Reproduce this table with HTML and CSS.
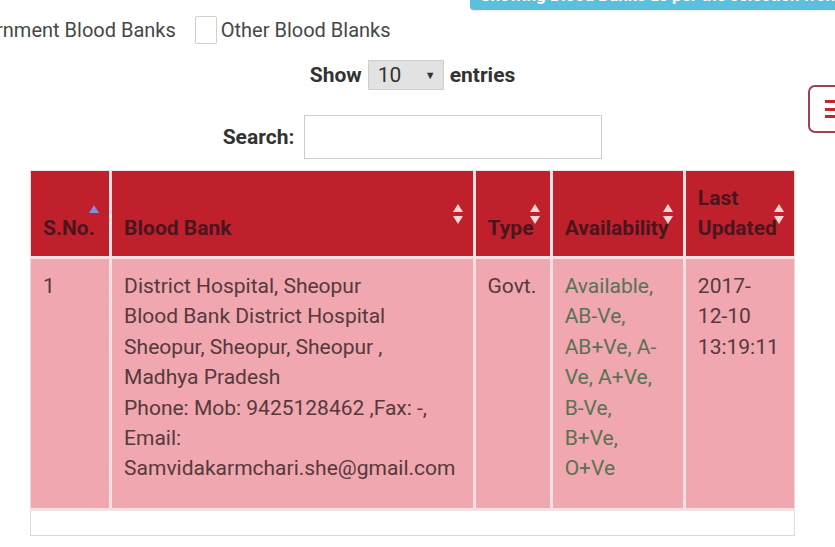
FILE: index.html
```html
<!DOCTYPE html>
<html lang="en">
<head>
<meta charset="utf-8">
<title>Blood Banks</title>
<link rel="stylesheet" href="styles.css">
</head>
<body>
<div class="banner-row">
  <div class="banner">Showing Blood Banks as per the selection from the filters</div>
</div>

<div class="filters">
  <label class="filter"><span class="box"></span><span>Government Blood Banks</span></label>
  <label class="filter"><span class="box"></span><span>Other Blood Blanks</span></label>
</div>

<div class="main">
  <button class="menu-btn" aria-label="Menu">
    <span class="bar"></span><span class="bar"></span><span class="bar"></span>
  </button>

  <div class="length">
    <span class="lbl">Show</span>
    <span class="select"><span>10</span><span class="caret">&#9660;</span></span>
    <span class="lbl">entries</span>
  </div>

  <div class="search">
    <span class="lbl">Search:</span>
    <span class="input"></span>
  </div>

  <table class="grid">
    <thead>
      <tr>
        <th class="c-no">S.No.<svg class="sort asc" viewBox="0 0 10 8" width="10" height="8"><path d="M5 0 L10 8 L0 8 Z"/></svg></th>
        <th class="c-bank">Blood Bank<svg class="sort" viewBox="0 0 10 20" width="10" height="20"><path d="M5 0 L10 8 L0 8 Z M5 20 L10 12 L0 12 Z"/></svg></th>
        <th class="c-type">Type<svg class="sort" viewBox="0 0 10 20" width="10" height="20"><path d="M5 0 L10 8 L0 8 Z M5 20 L10 12 L0 12 Z"/></svg></th>
        <th class="c-av">Availability<svg class="sort" viewBox="0 0 10 20" width="10" height="20"><path d="M5 0 L10 8 L0 8 Z M5 20 L10 12 L0 12 Z"/></svg></th>
        <th class="c-upd">Last<br>Updated<svg class="sort" viewBox="0 0 10 20" width="10" height="20"><path d="M5 0 L10 8 L0 8 Z M5 20 L10 12 L0 12 Z"/></svg></th>
      </tr>
    </thead>
    <tbody>
      <tr class="row">
        <td>1</td>
        <td>District Hospital, Sheopur<br>Blood Bank District Hospital<br>Sheopur, Sheopur, Sheopur ,<br>Madhya Pradesh<br>Phone: Mob: 9425128462 ,Fax: -,<br>Email:<br>Samvidakarmchari.she@gmail.com</td>
        <td>Govt.</td>
        <td class="avail">Available,<br>AB-Ve,<br>AB+Ve, A-<br>Ve, A+Ve,<br>B-Ve,<br>B+Ve,<br>O+Ve</td>
        <td>2017-<br>12-10<br>13:19:11</td>
      </tr>
      <tr class="foot">
        <td colspan="5"></td>
      </tr>
    </tbody>
  </table>
</div>
</body>
</html>
```

FILE: styles.css
```css
html, body {
  margin: 0;
  padding: 0;
  background: #ffffff;
  overflow: hidden;
}

body {
  font-family: Roboto, "Noto Sans", "Liberation Sans", sans-serif;
  font-size: 21px;
  color: #444;
  width: 835px;
  height: 547px;
}

.banner-row {
  display: flex;
  justify-content: flex-end;
  height: 10px;
}

.banner {
  margin-top: -20px;
  width: 355px;
  height: 30px;
  padding-left: 10px;
  background: #5bbfde;
  border-radius: 0 0 0 4px;
  color: #fff;
  font-weight: 700;
  font-size: 17px;
  line-height: 30px;
  white-space: nowrap;
  overflow: hidden;
  box-shadow: 0 1px 1px rgba(0,0,0,0.08);
}

.filters {
  display: flex;
  align-items: center;
  margin-top: 6px;
  margin-left: -75px;
  height: 28px;
  gap: 19px;
  font-size: 20px;
}

.filter {
  display: flex;
  align-items: center;
  gap: 4px;
  color: #474747;
  white-space: nowrap;
}

.box {
  display: inline-block;
  width: 20px;
  height: 26px;
  border: 1px solid #cfcfcf;
  border-radius: 2px;
  background: #fff;
}

.main {
  position: relative;
  margin-left: 30px;
  width: 765px;
  padding-top: 16px;
}

.menu-btn {
  position: absolute;
  left: 778px;
  top: 41px;
  width: 40px;
  height: 48px;
  border: 2px solid #9a4452;
  border-radius: 7px;
  background: #fff;
  padding: 0 0 0 15px;
  display: flex;
  flex-direction: column;
  justify-content: center;
  gap: 4.5px;
}

.menu-btn .bar {
  display: block;
  width: 20px;
  height: 3px;
  background: #c3262f;
}

.length {
  display: flex;
  justify-content: center;
  align-items: center;
  gap: 6px;
  height: 30px;
}

.lbl {
  font-weight: 700;
  color: #333;
}

.select {
  display: flex;
  align-items: center;
  justify-content: space-between;
  width: 58px;
  height: 28px;
  padding: 0 7px 0 9px;
  background: #e2e2e2;
  border: 1px solid #cfcfcf;
  color: #333;
}

.caret {
  font-size: 11px;
}

.search {
  display: flex;
  justify-content: center;
  align-items: center;
  gap: 10px;
  margin-top: 25px;
  height: 44px;
}

.input {
  display: inline-block;
  width: 296px;
  height: 42px;
  border: 1px solid #cdcdcd;
  background: #fff;
}

.grid {
  margin-top: 11px;
  width: 765px;
  border-collapse: collapse;
  table-layout: fixed;
}

.grid th, .grid td {
  border: 3px solid #f3e0e2;
}

.grid th {
  position: relative;
  background: #c0202c;
  color: #4b151d;
  font-weight: 700;
  text-align: left;
  vertical-align: bottom;
  line-height: 30px;
  padding: 12px 12px 13px 12px;
}

.grid th:first-child, .grid td:first-child {
  border-left: 1px solid #e6dede;
}

.grid th:last-child, .grid td:last-child {
  border-right: 1px solid #e6dede;
}

.grid thead th {
  border-top: 1px solid #f0e4e4;
}

.c-no { width: 54px; }
.c-bank { width: 336px; }
.c-type { width: 50px; }
.c-av { width: 106px; }
.c-upd { width: 84px; }

.sort {
  position: absolute;
  right: 10px;
  top: 33px;
  fill: #f2d6d8;
}

.sort.asc {
  fill: #7f8fe6;
  top: 34px;
  right: 10px;
}

.row td {
  background: #f0a7af;
  color: #55393d;
  vertical-align: top;
  line-height: 30.4px;
  padding: 12px 12px 24px 12px;
  white-space: nowrap;
}

.row td.avail {
  color: #5a7253;
}

.foot td {
  background: #fff;
  height: 24px;
  padding: 0;
  border-top: 3px solid #f3e0e2;
  border-bottom: 1px solid #d8d8d8;
}
```
